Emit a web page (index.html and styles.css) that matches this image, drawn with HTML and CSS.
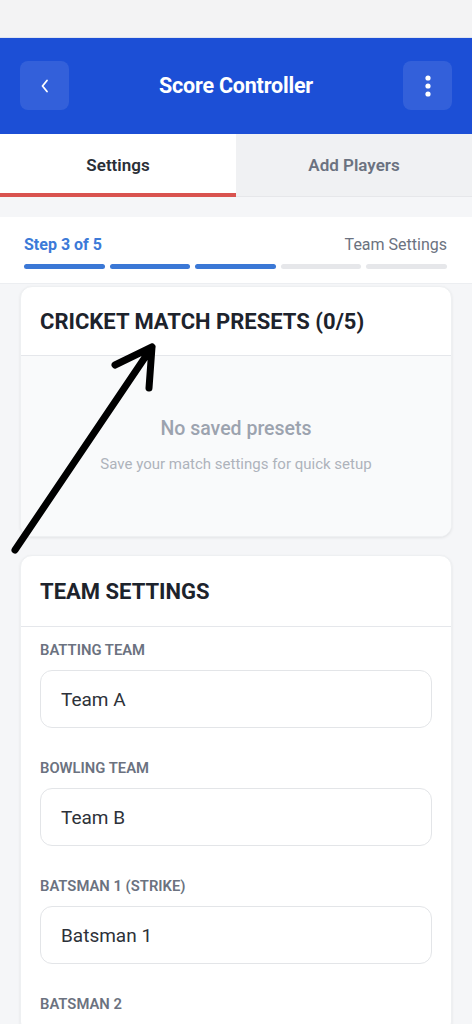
FILE: index.html
```html
<!DOCTYPE html>
<html>
<head>
<meta charset="utf-8">
<link rel="stylesheet" href="styles.css">
</head>
<body>
<div class="page">
  <div class="status"></div>
  <header class="topbar">
    <button class="icon-btn" aria-label="Back">
      <svg width="14" height="16" viewBox="0 0 14 16"><path d="M9 2.5 L4.5 8 L9 13.5" fill="none" stroke="#fff" stroke-width="1.8" stroke-linecap="round" stroke-linejoin="round"/></svg>
    </button>
    <h1 class="title">Score Controller</h1>
    <button class="icon-btn" aria-label="Menu">
      <svg width="6" height="24" viewBox="0 0 6 24"><circle cx="3" cy="4" r="2.6" fill="#fff"/><circle cx="3" cy="12" r="2.6" fill="#fff"/><circle cx="3" cy="20" r="2.6" fill="#fff"/></svg>
    </button>
  </header>
  <nav class="tabs">
    <div class="tab active">Settings</div>
    <div class="tab">Add Players</div>
  </nav>
  <section class="progress">
    <div class="progress-row">
      <span class="step">Step 3 of 5</span>
      <span class="step-name">Team Settings</span>
    </div>
    <div class="bars">
      <span class="bar done"></span>
      <span class="bar done"></span>
      <span class="bar done"></span>
      <span class="bar"></span>
      <span class="bar"></span>
    </div>
  </section>
  <section class="card presets">
    <div class="card-head"><h2>CRICKET MATCH PRESETS (0/5)</h2></div>
    <div class="empty">
      <div class="empty-title">No saved presets</div>
      <div class="empty-sub">Save your match settings for quick setup</div>
    </div>
  </section>
  <section class="card team">
    <div class="card-head tall"><h2>TEAM SETTINGS</h2></div>
    <div class="fields">
      <div class="field">
        <label>BATTING TEAM</label>
        <div class="input">Team A</div>
      </div>
      <div class="field">
        <label>BOWLING TEAM</label>
        <div class="input">Team B</div>
      </div>
      <div class="field">
        <label>BATSMAN 1 (STRIKE)</label>
        <div class="input">Batsman 1</div>
      </div>
      <div class="field last">
        <label>BATSMAN 2</label>
      </div>
    </div>
  </section>
  <svg class="arrow" width="472" height="1024" viewBox="0 0 472 1024">
    <path d="M15 550 L152 347 M115 365 L152 347 L149 388" fill="none" stroke="#000" stroke-width="7" stroke-linecap="round" stroke-linejoin="round"/>
  </svg>
</div>
</body>
</html>
```
FILE: styles.css
```css
* { box-sizing: border-box; }
html, body { margin: 0; padding: 0; }
body {
  background: #f5f6f8;
  font-family: Roboto, "Liberation Sans", Arial, sans-serif;
  color: #1f2937;
  width: 472px;
  height: 1024px;
  overflow: hidden;
}
.page { position: relative; display: flex; flex-direction: column; }
.status { height: 38px; background: #f3f3f4; border-bottom: 1px solid #dfe4f0; }
.topbar {
  height: 96px;
  background: #1c4fd6;
  display: flex;
  align-items: center;
  justify-content: space-between;
  padding: 0 20px 1px;
}
.icon-btn {
  width: 49px; height: 49px;
  border: none;
  border-radius: 8px;
  background: rgba(255,255,255,0.1);
  display: flex; align-items: center; justify-content: center;
  padding: 0;
}
.title {
  margin: 0;
  color: #fff;
  font-size: 21.5px;
  font-weight: 700;
  letter-spacing: -0.2px;
}
.tabs { display: flex; height: 63px; }
.tab {
  flex: 1;
  display: flex; align-items: center; justify-content: center;
  font-size: 17px; font-weight: 600;
  color: #6b7280;
  background: #f0f1f3;
  border-bottom: 1px solid #e6e7ea;
}
.tab.active {
  background: #fff;
  color: #2a2f37;
  border-bottom: 4px solid #d9534f;
  padding-top: 3px;
}
.progress {
  margin-top: 20px;
  background: #fff;
  padding: 16px 25px 14px 24px;
  border-bottom: 1px solid #eceef1;
}
.progress-row { display: flex; justify-content: space-between; align-items: center; height: 22px; }
.step { color: #3c7ad8; font-weight: 700; font-size: 16px; }
.step-name { color: #6b7280; font-size: 16px; }
.bars { display: flex; gap: 5px; margin-top: 9px; }
.bar { flex: 1; height: 5px; border-radius: 3px; background: #e6e7ea; }
.bar.done { background: #3b78d6; }
.card {
  margin: 2px 20px 0;
  background: #fff;
  border-radius: 12px;
  overflow: hidden;
  box-shadow: 0 1px 3px rgba(0,0,0,0.08);
  border: 1px solid #eef0f2;
}
.card-head {
  height: 69px;
  padding: 0 19px;
  display: flex; align-items: center;
  border-bottom: 1px solid #e5e7eb;
}
.card-head.tall { height: 71px; }
.card-head h2 {
  margin: 0;
  font-size: 22px;
  font-weight: 700;
  color: #1d232c;
  letter-spacing: 0;
}
.empty {
  background: #f9fafb;
  height: 180px;
  display: flex; flex-direction: column; align-items: center;
  padding-top: 61px;
}
.empty-title { font-size: 19.5px; font-weight: 500; color: #9ca3af; }
.empty-sub { font-size: 15px; color: #aeb3bb; margin-top: 15px; }
.team { margin-top: 18px; }
.fields { padding: 14px 19px 0; }
.field { margin-bottom: 31px; }
.field.last { margin-bottom: 20px; }
.field label {
  display: block;
  height: 18px;
  line-height: 18px;
  font-size: 14.8px;
  font-weight: 600;
  color: #6b7280;
  margin-bottom: 11px;
}
.input {
  height: 58px;
  border: 1px solid #e3e5e8;
  border-radius: 12px;
  padding: 0 20px;
  display: flex; align-items: center;
  font-size: 19px;
  color: #2d3139;
}
.arrow { position: absolute; left: 0; top: 0; pointer-events: none; }
```
